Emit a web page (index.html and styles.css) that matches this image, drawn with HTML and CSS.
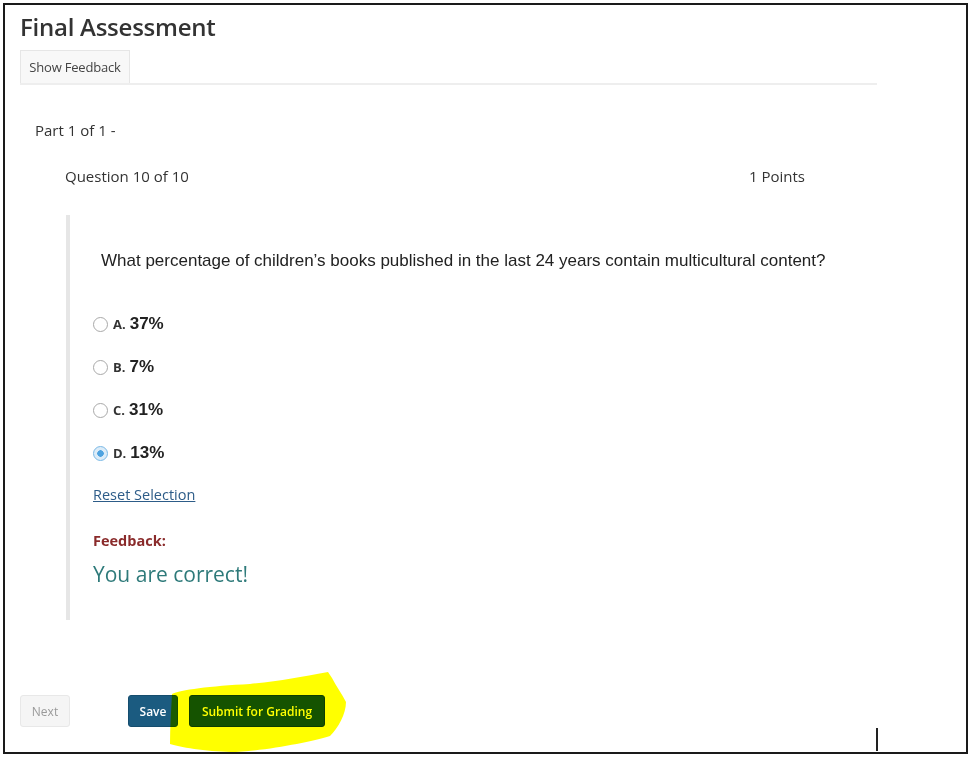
FILE: index.html
```html
<!DOCTYPE html>
<html>
<head>
<meta charset="utf-8">
<link rel="stylesheet" href="styles.css">
</head>
<body>
<div class="frame">
  <h1 class="title">Final Assessment</h1>
  <div class="tabs"><div class="tab">Show Feedback</div></div>
  <div class="part">Part 1 of 1 -</div>
  <div class="qhead"><span>Question 10 of 10</span><span>1 Points</span></div>
  <div class="qbody">
    <p class="qtext">What percentage of children’s books published in the last 24 years contain multicultural content?</p>
    <div class="opts">
      <div class="opt"><span class="radio"></span><span class="letter">A.</span><span class="val">37%</span></div>
      <div class="opt"><span class="radio"></span><span class="letter">B.</span><span class="val">7%</span></div>
      <div class="opt"><span class="radio"></span><span class="letter">C.</span><span class="val">31%</span></div>
      <div class="opt"><span class="radio checked"></span><span class="letter">D.</span><span class="val">13%</span></div>
    </div>
    <a class="reset" href="#">Reset Selection</a>
    <div class="fb-label">Feedback:</div>
    <div class="fb-text">You are correct!</div>
  </div>
  <div class="nav">
    <button class="btn next">Next</button>
    <button class="btn save">Save</button>
    <button class="btn submit">Submit for Grading</button>
    <svg class="highlight" width="180" height="82" viewBox="0 0 180 82"><path d="M2 22 C10 18 40 14 80 12 C110 9 130 5 158 0 L162 6 C166 14 172 22 176 30 C176 42 168 56 160 64 C140 70 100 78 66 80 C40 80 14 76 0 72 C0 56 1 40 2 22 Z" fill="#ffff00"/></svg>
  </div>
  <div class="caret"></div>
</div>
</body>
</html>
```
FILE: styles.css
```css
html, body { margin: 0; padding: 0; background: #fff; }
body { padding: 3px; font-family: "Open Sans", "Liberation Sans", sans-serif; color: #333; }
.frame {
  position: relative;
  box-sizing: border-box;
  width: 965px;
  height: 751px;
  border: 2px solid #1a1a1a;
  padding: 7px 0 0 15px;
}
.title { margin: 0; font-size: 24px; font-weight: 600; line-height: 30px; color: #333; letter-spacing: -0.25px; }
.tabs { width: 857px; border-bottom: 2px solid #eeeeee; margin-top: 8px; display: flex; }
.tab {
  width: 108px; height: 32px; box-sizing: content-box;
  background: #f8f8f8; border: 1px solid #e6e6e6; border-bottom: none;
  font-size: 13px; line-height: 32px; text-align: center; color: #444; letter-spacing: -0.2px;
}
.part { margin: 35px 0 0 15px; font-size: 15px; line-height: 20px; color: #333; }
.qhead { display: flex; justify-content: space-between; margin: 26px 0 0 0; padding: 0 68px 0 45px; width: 853px; box-sizing: border-box; font-size: 15px; line-height: 20px; color: #333; }
.qbody {
  margin: 29px 0 0 46px; height: 405px; box-sizing: border-box;
  border-left: 4px solid #e6e6e6; padding: 35px 0 0 23px;
}
.qtext { margin: 0 0 0 8px; font-family: "Liberation Sans", Arial, sans-serif; font-size: 17px; line-height: 22px; color: #222; }
.opts { margin-top: 41px; display: flex; flex-direction: column; gap: 21px; }
.opt { display: flex; align-items: center; height: 22px; }
.radio { width: 13px; height: 13px; border: 1px solid #a9a9a9; border-radius: 50%; margin-right: 5px; box-sizing: content-box; background: #fff; }
.radio.checked { border-color: #7ab9e6; background: radial-gradient(circle, #4ea3e0 0 3px, #dcecf8 3.5px 100%); }
.letter { font-size: 13px; font-weight: 700; color: #333; margin-right: 4px; }
.val { font-family: "Liberation Sans", Arial, sans-serif; font-size: 17px; font-weight: 700; color: #222; }
.reset { display: block; margin-top: 21px; font-size: 14.5px; line-height: 20px; color: #2d5c88; text-decoration: underline; width: max-content; }
.fb-label { margin-top: 26px; font-size: 14.5px; font-weight: 700; line-height: 20px; color: #8a2b2b; }
.fb-text { margin-top: 10px; font-size: 21px; line-height: 26px; color: #2e7a7a; }
.nav { position: relative; display: flex; align-items: center; margin-top: 75px; height: 32px; }
.btn { font-family: "Open Sans", sans-serif; font-size: 12px; height: 32px; border-radius: 3px; padding: 0; cursor: pointer; position: relative; z-index: 1; }
.next { width: 50px; background: #f5f5f5; border: 1px solid #e8e8e8; color: #9a9a9a; }
.save { width: 50px; margin-left: 58px; background: #1b5b80; border: 1px solid #154d6e; color: #fff; font-weight: 600; }
.submit { width: 136px; margin-left: 11px; background: #155316; border: 1px solid #0e3f0e; color: #fff; font-weight: 600; }
.highlight { position: absolute; left: 150px; top: -23px; z-index: 2; mix-blend-mode: multiply; }
.caret { position: absolute; left: 871px; top: 723px; width: 2px; height: 23px; background: #222; }
```
